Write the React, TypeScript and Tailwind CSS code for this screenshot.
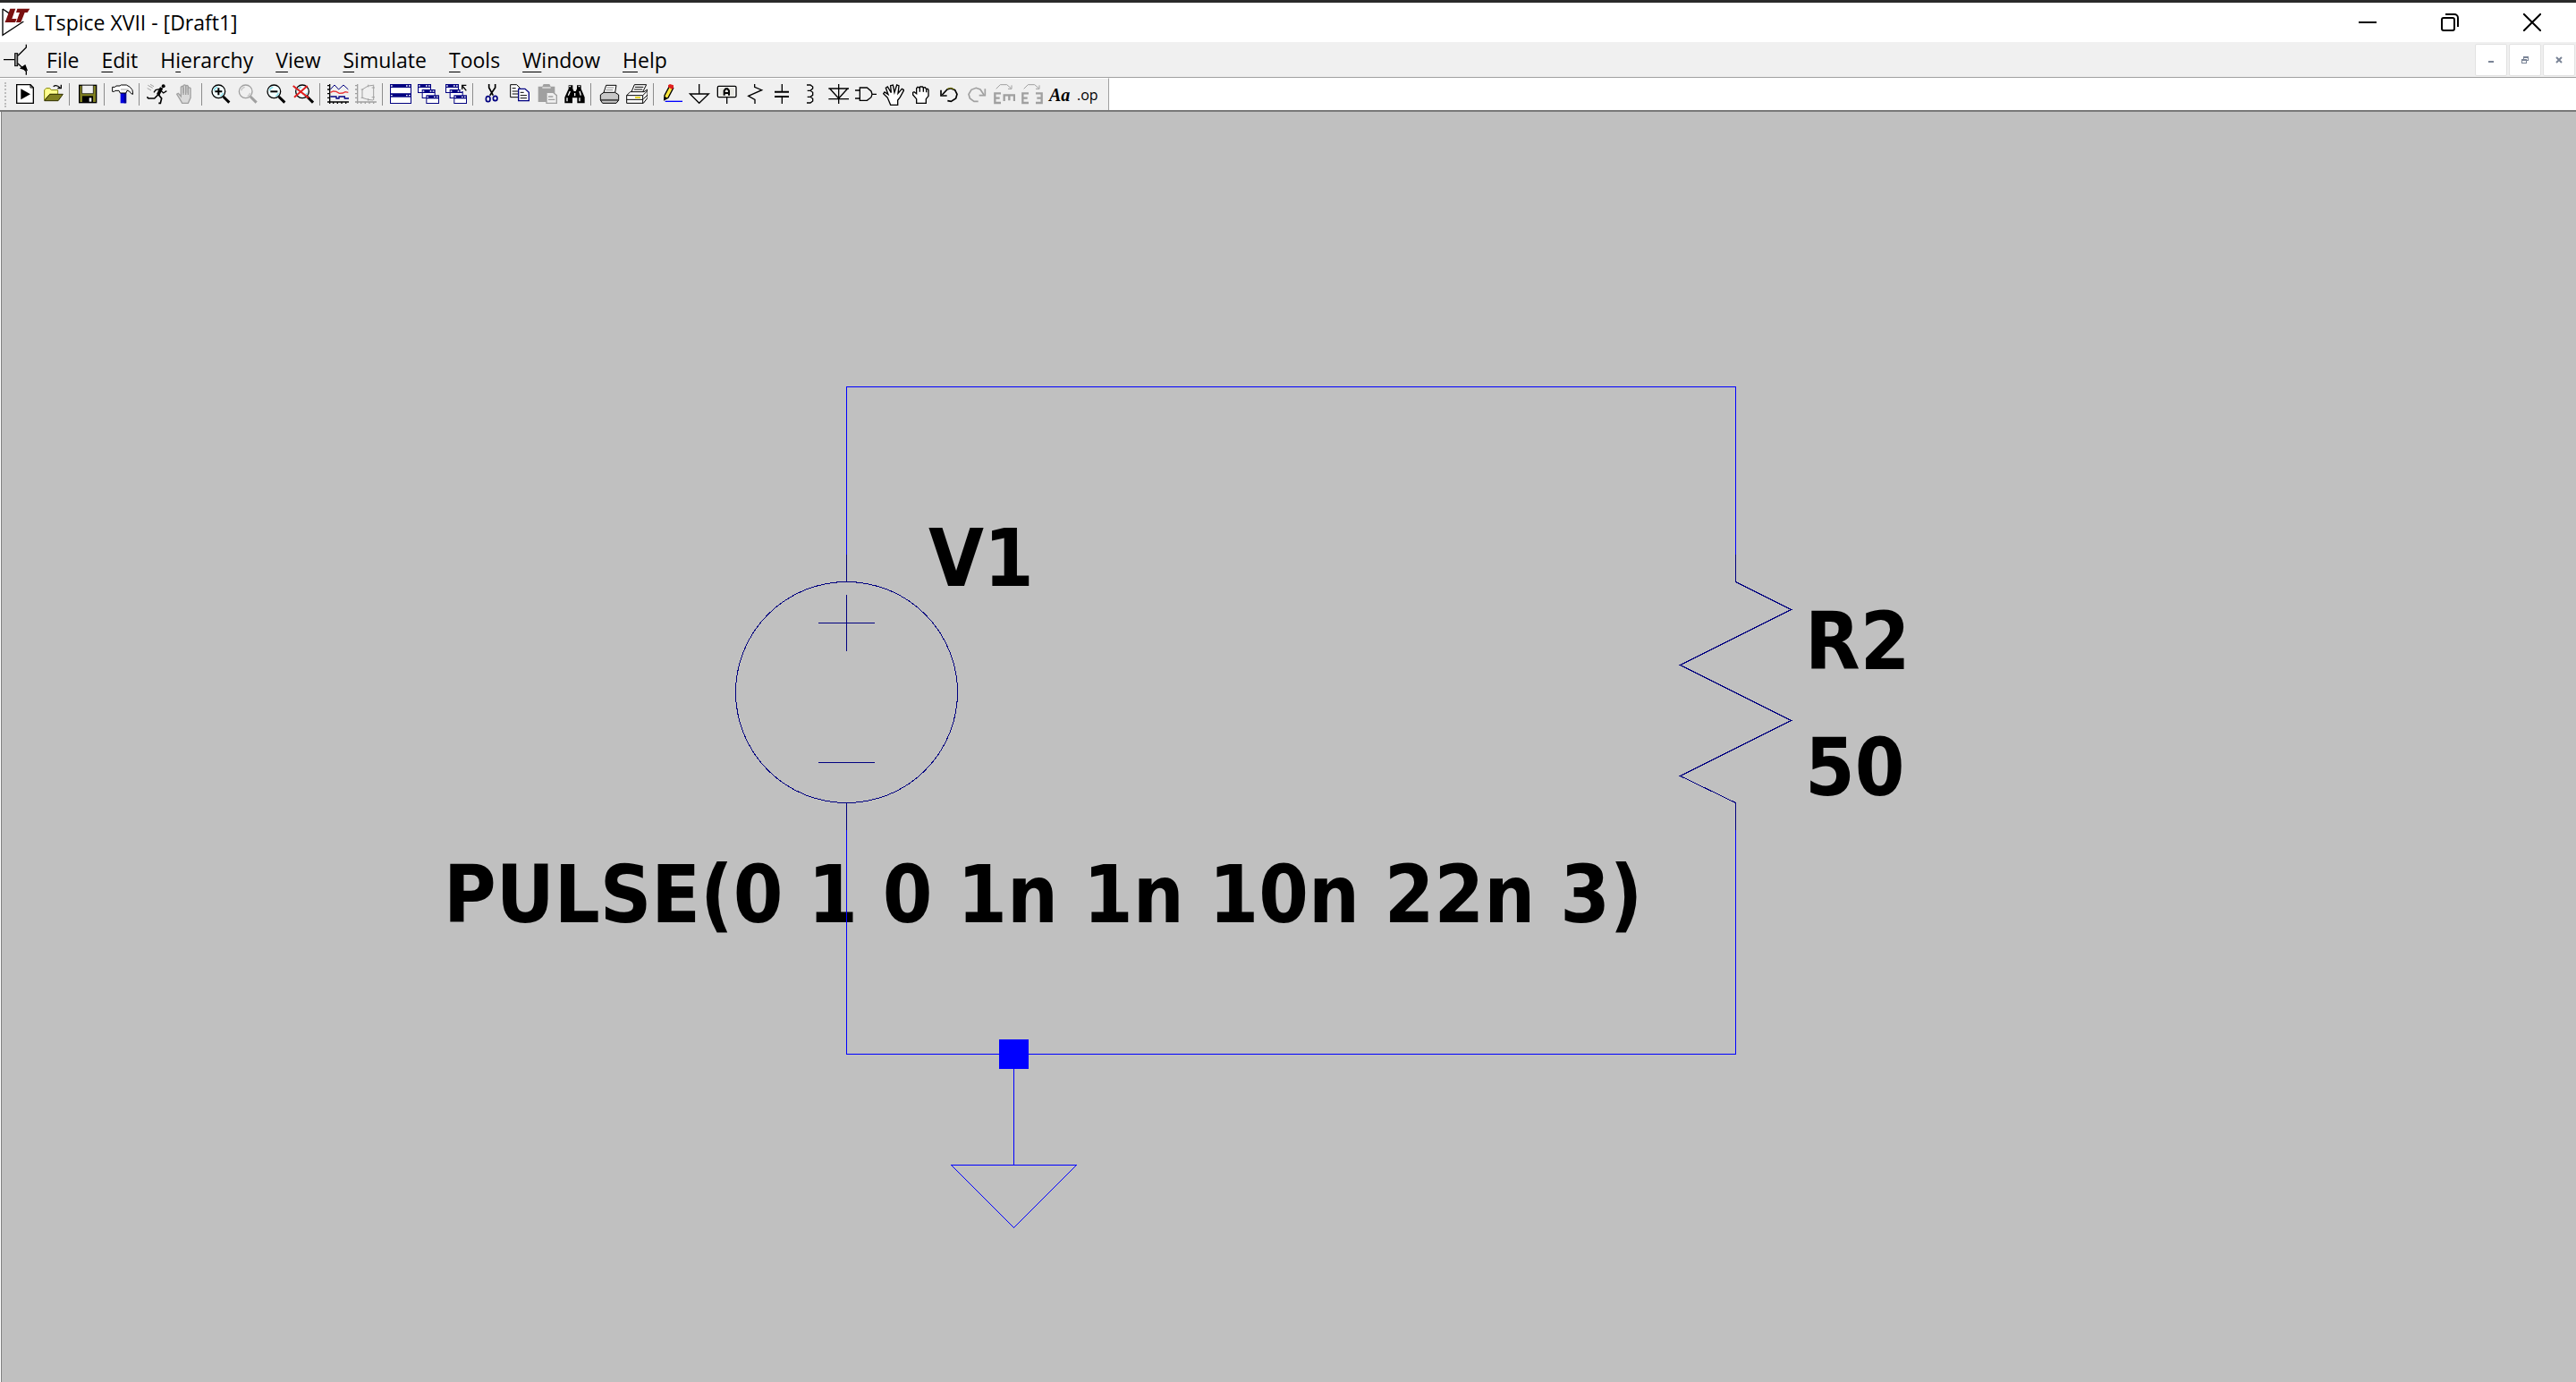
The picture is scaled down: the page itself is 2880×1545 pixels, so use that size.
import React from "react";

type IconProps = { children: React.ReactNode };

function Icon({ children }: IconProps) {
  return (
    <svg viewBox="0 0 72 72" className="block size-6 shrink-0" fill="none" stroke="#000" strokeWidth="4" aria-hidden="true">
      {children}
    </svg>
  );
}

const G = "#a0a0a0";
const N = "#000080";

function Lens({ cx, stroke = "#000" }: { cx: number; stroke?: string }) {
  return (
    <g stroke={stroke}>
      <circle cx={cx} cy="25" r="22" fill={stroke === "#000" ? "#f4ffff" : "none"} />
      <path d={`M${cx - 15} 22q2-10 12-12M${cx + 15} 30q-3 8-9 10`} stroke={stroke === "#000" ? "#7fdcea" : "#c8c8c8"} />
      <path d={`M${cx + 16} 42l20 20`} strokeWidth="9" />
    </g>
  );
}

function MiniWindow({ x, y, w, h }: { x: number; y: number; w: number; h: number }) {
  return (
    <g stroke="none">
      <rect x={x} y={y} width={w} height={h} fill={N} />
      <rect x={x + 3} y={y + 12} width={w - 6} height={h - 15} fill="#fff" />
      <path d={`M${x + 3} ${y + 4}h5v4h-5zM${x + w - 18} ${y + 4}h5v4h-5zM${x + w - 9} ${y + 4}h5v4h-5z`} fill="#fff" />
    </g>
  );
}

function Cascade() {
  return (
    <>
      <MiniWindow x={0} y={0} w={45} h={30} />
      <MiniWindow x={14} y={18} w={45} h={30} />
      <MiniWindow x={28} y={37} w={44} h={29} />
    </>
  );
}

const icons: Record<string, React.ReactNode> = {
  "New Schematic": (
    <>
      <path d="M8 2h46l10 10v52H8z" fill="#fff" />
      <path d="M54 2v10h10" strokeWidth="3" />
      <path d="M22 16l32 18-32 18z" fill="#000" stroke="none" />
    </>
  ),
  Open: (
    <>
      <path d="M8 54V20l6-6h12l5 6h22v14H26z" fill="#ffff90" stroke="#808000" strokeWidth="3" />
      <path d="M26 34h44L54 56H8z" fill="#808020" stroke="#303000" strokeWidth="3" />
      <path d="M38 8q10-8 22 4M64 2v12H52" strokeWidth="4" />
    </>
  ),
  Save: (
    <>
      <rect x="8" y="4" width="57" height="58" fill="#808020" />
      <rect x="17" y="5" width="38" height="27" fill="#f0f0f0" stroke="none" />
      <path d="M17 4v28h38V4" strokeWidth="2" />
      <rect x="18" y="40" width="36" height="22" fill="#000" stroke="none" />
      <rect x="41" y="46" width="8" height="13" fill="#f0f0f0" stroke="none" />
    </>
  ),
  "Control Panel": (
    <>
      <rect x="29" y="28" width="18" height="36" fill="#0000e0" stroke="none" />
      <path d="M41 28h8v36h-8z" fill="#000090" stroke="none" />
      <path d="M2 10h8l5-4h12l4-3h18l12 7 8 10 2 14-6-2-6-8-8-2-4 8H28l-4-8H12l-4 3H2z" fill="#fff" strokeWidth="3" />
      <path d="M30 18h26" stroke={G} strokeWidth="3" />
    </>
  ),
  Run: (
    <>
      <circle cx="56" cy="7" r="6" fill="#000" stroke="none" />
      <path d="M50 12L38 36" strokeWidth="11" />
      <path d="M46 16L30 20l-6 8M48 22l8 8 11-7" strokeWidth="4" />
      <path d="M38 36L26 48H6l-5-5M40 36l10 12-4 16-6 0" strokeWidth="5" />
      <path d="M4 4l16 9M12 1l12 7M2 14l13 7" stroke={G} strokeWidth="3" />
    </>
  ),
  Halt: (
    <>
      <path d="M18 50L8 34l5-3 9 10V10q4-5 8 0v20V5q4-5 8 0v24V7q4-5 8 0v23V14q4-5 8 0v32l-8 18H26z" stroke={G} fill="#dadada" strokeWidth="4" />
      <path d="M30 36V12M38 36V8M46 36V10" stroke={G} />
    </>
  ),
  "Zoom In": (
    <>
      <Lens cx={31} />
      <path d="M31 13v24M19 25h24" strokeWidth="6" />
    </>
  ),
  "Zoom Pan": <Lens cx={29} stroke={G} />,
  "Zoom Out": (
    <>
      <Lens cx={31} />
      <path d="M19 25h24" strokeWidth="6" />
    </>
  ),
  "Zoom Full Extents": (
    <>
      <Lens cx={33} />
      <path d="M2 6l52 40M50 6L6 44" stroke="#e02020" strokeWidth="6" />
    </>
  ),
  "Plot Settings": (
    <>
      <path d="M8 0v66M0 60h72M0 5h8M0 18h8M0 32h8M0 46h8M20 60v6M34 60v6M48 60v6M62 60v6" />
      <path d="M10 18L24 3l14 15L54 3l16 15" stroke={N} strokeWidth="3" />
      <path d="M10 28l10-4 10 1 10 6 12-1 8-4 10 2" stroke="#e83030" />
      <path d="M10 42h20v6h9v-6h19v6h14" stroke={N} />
    </>
  ),
  "Smith Chart": (
    <>
      <path d="M8 0v66M0 60h72M0 5h8M0 18h8M0 32h8M0 46h8M20 60v6M34 60v6M48 60v6M62 60v6" stroke={G} />
      <path d="M62 2v52M60 4L44 6 24 18v28l20 6 16 2M20 18h8M20 46h8M44 2v8M44 48v8M56 12h10M56 44h10" stroke={G} strokeWidth="3" />
    </>
  ),
  "Tile Windows": (
    <>
      <MiniWindow x={0} y={0} w={72} h={34} />
      <MiniWindow x={0} y={32} w={72} h={34} />
    </>
  ),
  "Cascade Windows": <Cascade />,
  "Close All": (
    <>
      <Cascade />
      <rect x="50" y="0" width="22" height="24" fill="#f0f0f0" stroke="none" />
      <path d="M70 22L56 5M56 18V4h14" />
    </>
  ),
  Cut: (
    <>
      <path d="M29 0v12l14 26M50 0v12L32 38" strokeWidth="5" />
      <ellipse cx="26" cy="50" rx="7" ry="9" stroke={N} strokeWidth="5" />
      <ellipse cx="50" cy="48" rx="7" ry="8" stroke={N} strokeWidth="5" />
    </>
  ),
  Copy: (
    <>
      <path d="M8 2h21l10 10v32H8z" fill="#fff" strokeWidth="3" />
      <path d="M14 14h12M14 24h20M14 33h20" strokeWidth="3" />
      <path d="M35 16h22l13 12v28H35z" fill="#fff" stroke={N} />
      <path d="M41 28h12M41 38h22M41 47h22" strokeWidth="3" />
    </>
  ),
  Paste: (
    <>
      <path d="M8 8h14l4-8h20l4 8h14v24H36v28H8z" fill={G} stroke="none" />
      <path d="M22 12h28" stroke="#e8e8e8" />
      <path d="M36 28h22l12 10v26H36z" fill="#f0f0f0" stroke={G} />
      <path d="M42 42h16M42 52h22" stroke={G} />
    </>
  ),
  Find: (
    <>
      <path d="M17 4h14v12l4 8h6l4-8V4h14v12l12 28v20H46V46H30v18H4V44l13-28z" fill="#000" stroke="none" />
      <path d="M19 8h5M50 8h5M12 46v12M22 24l-6 14M54 24l4 14M54 46v12M38 30v10" stroke="#fff" strokeWidth="4" />
    </>
  ),
  "Print Monitor": (
    <>
      <path d="M18 28L26 4h34l-4 24" fill="#fff" strokeWidth="3" />
      <path d="M18 28h38l12 8v18l-8 10H14L7 54V36z" fill="#c8c8c8" strokeWidth="3" />
      <path d="M9 52h58M28 12h24M25 20h24" stroke="#888" strokeWidth="3" />
      <path d="M9 54h58" strokeWidth="3" />
    </>
  ),
  Print: (
    <>
      <path d="M18 26L28 2h40L56 26" fill="#fff" strokeWidth="3" />
      <path d="M30 10h28M27 18h28" strokeWidth="3" />
      <path d="M14 26h46l12-8v28L58 64H2V38z" fill="#fff" strokeWidth="3" />
      <path d="M2 38h54l16-16M56 38v26M2 52h54M58 50l14-14" strokeWidth="3" />
      <path d="M30 45h18" stroke="#e0d000" strokeWidth="5" />
    </>
  ),
  "Draw Wire": (
    <>
      <path d="M12 38L28 8l13 6L24 46 11 53z" fill="#ffe840" strokeWidth="4" />
      <path d="M24 4l6-4 12 4v8l-4 6-14-8z" fill="#e02020" stroke="none" />
      <path d="M10 54l2-12 9 4z" fill="#000" stroke="none" />
      <path d="M14 58h58" stroke="#0000ff" />
    </>
  ),
  "Place Ground": <path d="M35 0v33M4 33h63L35 64z" />,
  "Label Net": (
    <>
      <rect x="4" y="7" width="62" height="37" rx="4" fill="#fff" />
      <rect x="10" y="11" width="50" height="30" fill="#e6e6e0" stroke="none" />
      <path d="M26 38V22l5-6h6l5 6v16M26 30h16" strokeWidth="6" />
      <path d="M35 44v22" />
    </>
  ),
  Resistor: <path d="M35 0v10l24 10-45 20 22 12v14" />,
  Capacitor: (
    <>
      <path d="M34 0v24M34 44v22" />
      <path d="M9 26h48M9 42h48" strokeWidth="6" />
    </>
  ),
  Inductor: <path d="M24 3h12l8 6v6l-8 7H26h10l8 6v9l-8 6H26h10l8 6v8l-8 6H24" />,
  Diode: <path d="M38 0v66M4 15h68M8 15l30 33 30-33M4 50h68" />,
  Component: <path d="M16 12h24l14 12 3 10-3 10-14 11H16zM0 21h16M0 48h16M57 34h15" />,
  Move: (
    <path
      d="M16 46L2 32l4-5 12 8-8-22 6-4 12 20-2-24 8-2 5 25 8-25 7 3-3 25 13-15 7 4-13 24-8 10v16H26z"
      fill="#fff"
      strokeWidth="4"
    />
  ),
  Drag: (
    <>
      <path d="M20 64V50L8 36v-8l4-2 8 6V14l4-4 6 2 2-3h8l3 3 6-1 3 5 6 0 2 4v20l-8 10v14z" fill="#fff" strokeWidth="4" />
      <path d="M31 12v14M43 12v14M53 16v12" strokeWidth="4" />
    </>
  ),
  Undo: (
    <>
      <path d="M13 36L30 18l12-4 14 6 7 14-4 14-16 10-12-2" strokeWidth="5" />
      <path d="M30 16l12-3 12 5" stroke="#808000" strokeWidth="3" />
      <path d="M9 20v19h20" strokeWidth="5" />
    </>
  ),
  Redo: (
    <>
      <path d="M60 36L48 18l-14-5-16 6-9 15 4 14 14 10 14 0" stroke={G} strokeWidth="5" />
      <path d="M64 16v22H44" stroke={G} strokeWidth="5" />
    </>
  ),
  Rotate: (
    <g stroke={G}>
      <path d="M8 16L22 2h22l14 12M60 4v12H48" strokeWidth="3" />
      <path d="M24 31H4v32h20M4 47h16" strokeWidth="7" />
      <path d="M35 57V37h34v20M52 37v18" strokeWidth="7" />
    </g>
  ),
  Mirror: (
    <g stroke={G}>
      <path d="M8 16L22 2h22l14 12M60 4v12H48" strokeWidth="3" />
      <path d="M24 31H4v32h20M4 47h16" strokeWidth="7" />
      <path d="M48 31h20v32H48M52 47h16" strokeWidth="7" />
    </g>
  ),
};

const groups: string[][] = [
  ["New Schematic", "Open"],
  ["Save"],
  ["Control Panel"],
  ["Run", "Halt"],
  ["Zoom In", "Zoom Pan", "Zoom Out", "Zoom Full Extents"],
  ["Plot Settings", "Smith Chart"],
  ["Tile Windows", "Cascade Windows", "Close All"],
  ["Cut", "Copy", "Paste", "Find"],
  ["Print Monitor", "Print"],
  [
    "Draw Wire", "Place Ground", "Label Net", "Resistor", "Capacitor", "Inductor", "Diode", "Component",
    "Move", "Drag", "Undo", "Redo", "Rotate", "Mirror",
  ],
];

const menus: [string, string, string][] = [
  ["", "F", "ile"],
  ["", "E", "dit"],
  ["H", "i", "erarchy"],
  ["", "V", "iew"],
  ["", "S", "imulate"],
  ["", "T", "ools"],
  ["", "W", "indow"],
  ["", "H", "elp"],
];

function TitleBar() {
  return (
    <header className="flex h-[47px] shrink-0 items-stretch border-t-[3px] border-[#2a2a2a] bg-white pr-[3px]">
      <div className="flex flex-1 items-center gap-1 pl-[2px]">
        <svg viewBox="0 0 96 96" className="size-8 shrink-0" aria-hidden="true">
          <path d="M3 3v88l70-46M3 3l24 16" fill="none" stroke="#000" strokeWidth="4" />
          <path d="M28 2h18l-12 34h16l-5 12H10l4-8z" fill="#7a1010" />
          <path d="M52 2h42l-8 13h-9L64 48H48l12-33H48z" fill="#7a1010" />
        </svg>
        <h1 className="text-[23px] leading-7 whitespace-nowrap">LTspice XVII - [Draft1]</h1>
      </div>
      <div className="flex">
        <button type="button" aria-label="Minimize" className="flex w-[92px] items-center justify-center">
          <span className="h-[2px] w-5 bg-black" />
        </button>
        <button type="button" aria-label="Restore" className="flex w-[92px] items-center justify-center">
          <svg viewBox="0 0 20 20" className="size-5" fill="none" stroke="#000" strokeWidth="2">
            <rect x="1" y="5" width="14" height="14" rx="2" />
            <path d="M5 1h10a4 4 0 0 1 4 4v10" />
          </svg>
        </button>
        <button type="button" aria-label="Close" className="flex w-[92px] items-center justify-center">
          <svg viewBox="0 0 20 20" className="size-5" stroke="#000" strokeWidth="2">
            <path d="M0 0l20 20M20 0L0 20" />
          </svg>
        </button>
      </div>
    </header>
  );
}

const childButton = "flex size-9 items-center justify-center rounded-[2px] border border-[#e2e2e2] bg-white";

function MenuBar() {
  return (
    <nav className="flex h-10 shrink-0 items-center border-b border-[#a0a0a0] bg-[#f0f0f0] pr-px">
      <svg viewBox="0 0 84 108" className="ml-1 h-9 w-7 shrink-0" fill="none" stroke="#000" strokeWidth="4" aria-hidden="true">
        <path d="M0 53h36M48 40l28-28V2M48 66l28 26v12" />
        <rect x="38" y="32" width="9" height="42" fill="#888" strokeWidth="3" />
        <path d="M78 88l-6-16-14 10z" fill="#000" />
      </svg>
      <ul className="ml-2 flex flex-1 gap-px text-[23px] leading-8">
        {menus.map(([before, key, after]) => (
          <li key={key + after}>
            <button type="button" className="px-3 whitespace-nowrap">
              {before}
              <span className="underline decoration-1 underline-offset-4">{key}</span>
              {after}
            </button>
          </li>
        ))}
      </ul>
      <div className="flex gap-[2px]">
        <button type="button" aria-label="Minimize document" className={childButton}>
          <svg viewBox="0 0 8 8" className="size-2" fill="#7a8496"><rect x="1" y="5" width="6" height="2" /></svg>
        </button>
        <button type="button" aria-label="Restore document" className={childButton}>
          <svg viewBox="0 0 8 8" className="size-2" fill="none" stroke="#7a8496" shapeRendering="crispEdges">
            <path d="M2.500 3V.5h5v4H6M2 1.500h6M.5 3.500h5v4h-5zM0 4.500h6" />
          </svg>
        </button>
        <button type="button" aria-label="Close document" className={childButton}>
          <svg viewBox="0 0 8 8" className="size-2" stroke="#7a8496" strokeWidth="2"><path d="M1 1l6 6M7 1L1 7" /></svg>
        </button>
      </div>
    </nav>
  );
}

const toolButton = "flex h-9 w-[31px] shrink-0 items-center pl-1";

function ToolBar() {
  return (
    <div className="flex h-[38px] shrink-0 border-b-2 border-[#787878] bg-white">
      <div role="toolbar" aria-label="Schematic" className="flex h-full items-center border-t border-r border-t-white border-r-[#a0a0a0] bg-[#f0f0f0] pr-2">
        <span className="ml-[5px] h-7 w-[7px] border-l-2 border-dotted border-[#bcbcbc]" />
        {groups.map((group, i) => (
          <React.Fragment key={group[0]}>
            {i > 0 && <span className="mr-1 ml-[3px] h-[25px] w-px shrink-0 bg-[#8c8c8c]" />}
            {group.map((name) => (
              <button key={name} type="button" aria-label={name} title={name} className={toolButton}>
                <Icon>{icons[name]}</Icon>
              </button>
            ))}
          </React.Fragment>
        ))}
        <button type="button" className={`${toolButton} font-["Liberation_Serif",serif] text-[20px] leading-6 font-bold italic`}>Aa</button>
        <button type="button" className={`${toolButton} text-[16px] leading-5`}>.op</button>
      </div>
    </div>
  );
}

function Schematic() {
  return (
    <main className="flex min-h-0 flex-1 pl-px">
      <div className="flex flex-1 border-l border-[#808080] bg-[#c0c0c0]">
        <svg className="block h-full w-full" fill="none" role="img" aria-label="Draft1 schematic">
          <g transform="translate(-2 -125)">
            <g fill="#000" className='font-["DejaVu_Sans_Condensed","Open_Sans",sans-serif] text-[89px] font-bold'>
              <text x="1038" y="655">V1</text>
              <text x="2018" y="748">R2</text>
              <text x="2018" y="889">50</text>
              <text x="496" y="1031">PULSE(0 1 0 1n 1n 10n 22n 3)</text>
            </g>
            <g shapeRendering="crispEdges">
              <g stroke="#0000ff">
                <path d="M946.500 620V432.500H1940.500V620M946.500 928V1178.500H1940.500V928M1133.500 1178V1302.500" />
                <path d="M1063.500 1302.500H1203.500L1133.500 1372.500Z" />
              </g>
              <rect x="1117" y="1162" width="33" height="33" fill="#0000ff" />
              <g stroke="#000080">
                <path d="M946.500 620V650M946.500 898V928M915 696.500H978M946.500 665V728M915 852.500H978" />
                <ellipse cx="946.500" cy="774" rx="124" ry="123.500" />
                <path d="M1940.500 620V650.500L2002.500 681.500L1878.500 743.500L2002.500 805.500L1878.500 867.500L1940.500 897.500V928" />
              </g>
            </g>
          </g>
        </svg>
      </div>
    </main>
  );
}

export default function App() {
  return (
    <div className='flex h-screen flex-col overflow-hidden bg-white font-["Open_Sans","Noto_Sans",sans-serif] text-black'>
      <TitleBar />
      <MenuBar />
      <ToolBar />
      <Schematic />
    </div>
  );
}
